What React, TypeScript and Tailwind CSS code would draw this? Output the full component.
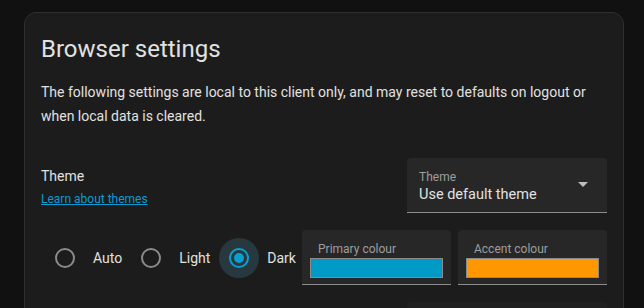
import React from "react";

const Radio: React.FC<{ label: string; checked?: boolean }> = ({ label, checked }) => (
    <div className="flex items-center">
        <div
            className={
                checked
                    ? "w-10 h-10 rounded-full flex items-center justify-center bg-[#27393f]"
                    : "w-10 h-10 rounded-full flex items-center justify-center"
            }
        >
            {checked ? (
                <div className="w-5 h-5 rounded-full border-2 border-[#0a9fcf] flex items-center justify-center">
                    <div className="w-[10px] h-[10px] rounded-full bg-[#0a9fcf]" />
                </div>
            ) : (
                <div className="w-5 h-5 rounded-full border-2 border-[#8a8a8a]" />
            )}
        </div>
        <span className="ml-2 text-[14px] leading-5 text-[#e1e1e1]">{label}</span>
    </div>
);

const ColourBox: React.FC<{ label: string; colour: string }> = ({ label, colour }) => (
    <div className="w-[149px] h-[55px] rounded-t bg-[#272727] border-b border-[#8c8c8c] pt-[11px]">
        <div className="pl-4 text-[12px] leading-4 text-[#9e9e9e]">{label}</div>
        <div className={"mx-2 mt-[1px] h-5 border border-[#8a8a8a] " + colour} />
    </div>
);

const App: React.FC = () => {
    return (
        <div className="h-[308px] overflow-hidden bg-[#111111] pt-3 pl-6 font-['Roboto',sans-serif]">
            {/* карточка настроек */}
            <div className="w-[600px] rounded-xl border border-[#2e2e2e] bg-[#1c1c1c] px-4 pt-5 pb-6">
                <h1 className="text-[24px] leading-8 text-[#e1e1e1]">Browser settings</h1>
                <p className="mt-[15px] text-[14px] leading-6 text-[#e1e1e1]">
                    The following settings are local to this client only, and may reset to defaults on logout or
                    when local data is cleared.
                </p>

                {/* Тема */}
                <div className="mt-[30px] flex items-center justify-between">
                    <div className="pt-[2px]">
                        <div className="text-[14px] leading-6 text-[#e1e1e1]">Theme</div>
                        <a href="#" className="block mt-[1px] text-[12px] leading-5 text-[#0a9bd2] underline">
                            Learn about themes
                        </a>
                    </div>
                    <div className="w-[200px] h-[55px] rounded-t bg-[#272727] border-b border-[#8c8c8c] flex items-center justify-between">
                        <div className="pl-3 pt-[3px]">
                            <div className="text-[12px] leading-4 text-[#9e9e9e]">Theme</div>
                            <div className="text-[14.5px] leading-[19px] text-[#e1e1e1]">Use default theme</div>
                        </div>
                        <svg width="10" height="5" viewBox="0 0 10 5" className="mr-[19px] mb-[1px]">
                            <path d="M0 0 L5 5 L10 0 Z" fill="#bdbdbd" />
                        </svg>
                    </div>
                </div>

                {/* Режим и цвета */}
                <div className="mt-[17px] flex items-center">
                    <div className="pl-1 flex items-center gap-[9px]">
                        <Radio label="Auto" />
                        <Radio label="Light" />
                        <Radio label="Dark" checked />
                    </div>
                    <div className="ml-auto flex gap-[7px]">
                        <ColourBox label="Primary colour" colour="bg-[#009ac7]" />
                        <ColourBox label="Accent colour" colour="bg-[#ff9800]" />
                    </div>
                </div>

                {/* следующая строка */}
                <div className="mt-[17px] flex justify-end">
                    <div className="w-[200px] h-[55px] rounded-t bg-[#202020]" />
                </div>
            </div>
        </div>
    );
};

export default App;
